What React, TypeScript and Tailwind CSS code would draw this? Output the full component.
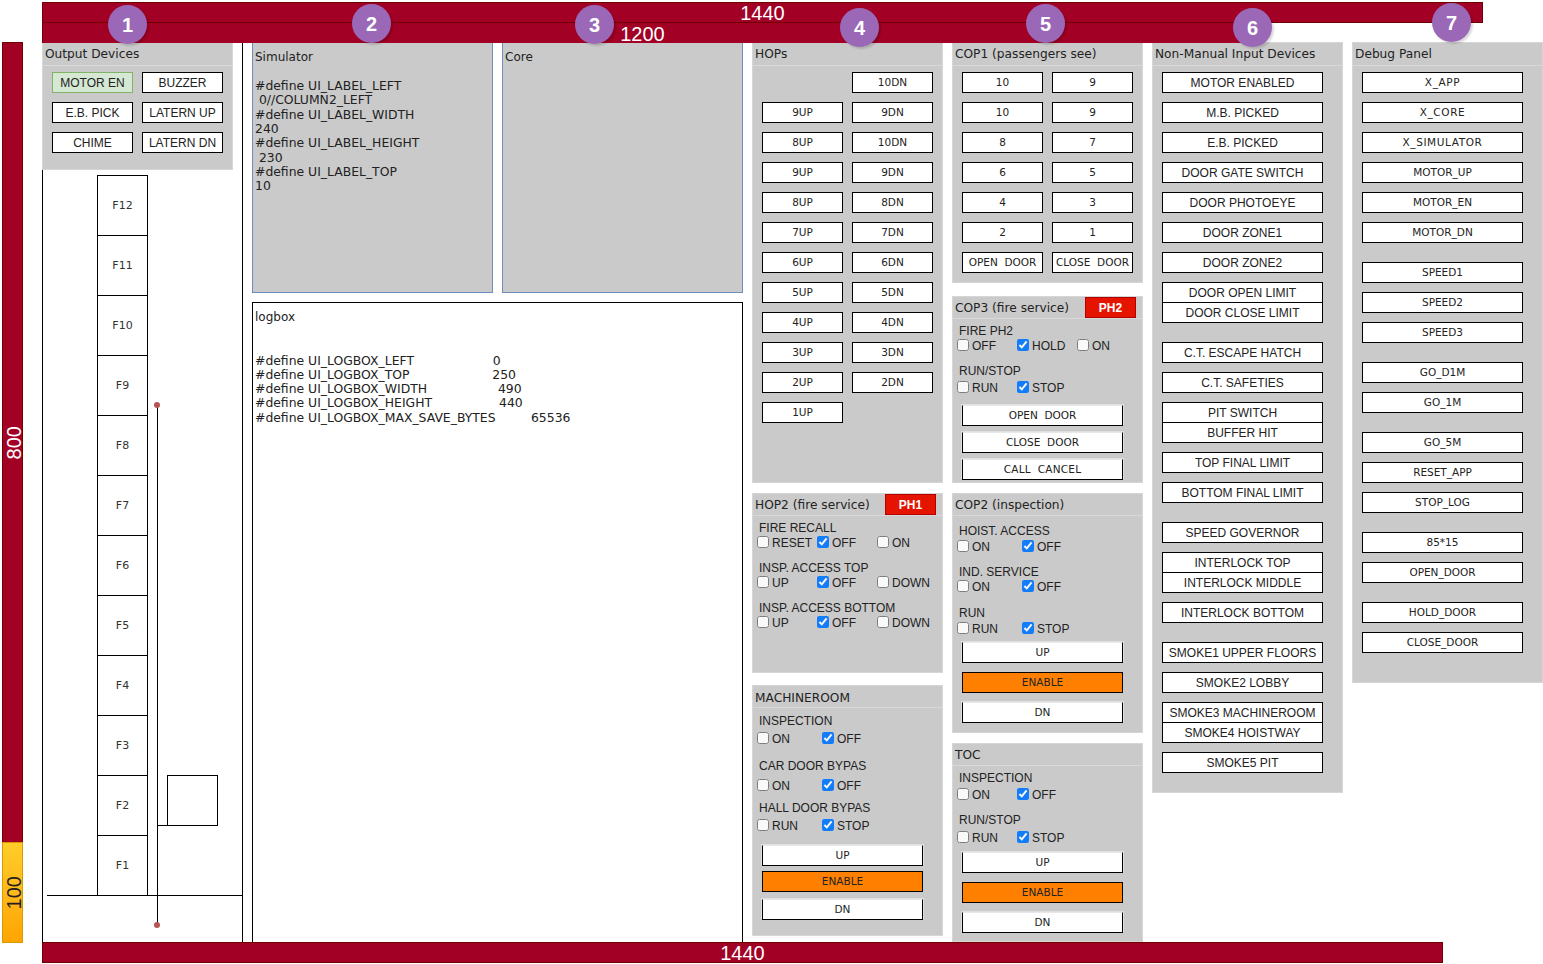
import React from 'react';

type ButtonItem = { label: string; gap?: string };

const sans = "font-['Liberation_Sans',sans-serif]";
const deja = "font-['DejaVu_Sans',sans-serif]";

const Btn = ({ label, small, green, className = '' }: { label: string; small?: boolean; green?: boolean; className?: string }) => (
  <div
    className={`flex h-[21px] items-center justify-center border whitespace-pre text-[#222] ${
      green ? 'border-[#82b366] bg-[#d5e8d4]' : 'border-black bg-white'
    } ${small ? `${deja} text-[10.5px]` : `${sans} text-[12px]`} ${className}`}
  >
    {label}
  </div>
);

// raised button used on the car panels
const RaisedBtn = ({ label, className = '' }: { label: string; className?: string }) => (
  <div
    className={`flex h-[21px] w-[161px] items-center justify-center border border-black border-t-[#e8e8e8] bg-white whitespace-pre ${deja} text-[10.5px] text-[#222] shadow-[-1px_-1px_0_#e0e0e0,1px_-1px_0_#e0e0e0] ${className}`}
  >
    {label}
  </div>
);

const EnableBtn = ({ className = '' }: { className?: string }) => (
  <div
    className={`flex h-[21px] w-[161px] items-center justify-center border border-black bg-[#ff8000] ${deja} text-[10.5px] text-[#222] ${className}`}
  >
    ENABLE
  </div>
);

const Panel = ({
  title,
  badge,
  first,
  titleClass = '',
  className = '',
  children,
}: {
  title: string;
  badge?: string;
  first?: boolean;
  titleClass?: string;
  className?: string;
  children: React.ReactNode;
}) => (
  <div className={`w-[191px] shrink-0 overflow-hidden border border-[#d6d6d6] bg-[#cacaca] ${first ? '-mt-px' : ''} ${className}`}>
    <div
      className={`flex items-center justify-between border-b border-[#d9d9d9] pl-[2px] pr-[6px] ${
        first ? 'h-[23px] pb-px' : 'h-[22px]'
      } ${deja} text-[12.2px] text-[#222] ${titleClass}`}
    >
      <span className="pt-[2px]">{title}</span>
      {badge && (
        <span className={`flex h-[21px] w-[51px] items-center justify-center border border-[#b20000] bg-[#e51400] ${sans} text-[12px] font-bold text-white`}>
          {badge}
        </span>
      )}
    </div>
    {children}
  </div>
);

const Field = ({
  label,
  top,
  gap,
  cols,
  width,
}: {
  label: string;
  top: string;
  gap: string;
  cols: [string, boolean][];
  width: string;
}) => (
  <div className={`${sans} text-[12px] text-[#222] ${top}`}>
    <div className="h-[14px] pl-[6px] leading-[16px]">{label}</div>
    <div className={`flex h-[14px] items-center pl-[4px] ${gap}`}>
      {cols.map(([name, on]) => (
        <label key={name} className={`flex items-center ${width}`}>
          <input type="checkbox" defaultChecked={on} className="m-0 h-[12px] w-[12px] shrink-0 opacity-90" />
          <span className="ml-[3px] whitespace-nowrap pt-[2px] leading-[14px]">{name}</span>
        </label>
      ))}
    </div>
  </div>
);

const hops: string[][] = [
  ['', '10DN'],
  ['9UP', '9DN'],
  ['8UP', '10DN'],
  ['9UP', '9DN'],
  ['8UP', '8DN'],
  ['7UP', '7DN'],
  ['6UP', '6DN'],
  ['5UP', '5DN'],
  ['4UP', '4DN'],
  ['3UP', '3DN'],
  ['2UP', '2DN'],
  ['1UP', ''],
];

const cop1 = ['10', '9', '10', '9', '8', '7', '6', '5', '4', '3', '2', '1', 'OPEN  DOOR', 'CLOSE  DOOR'];

const nonManual: ButtonItem[] = [
  { label: 'MOTOR ENABLED' },
  { label: 'M.B. PICKED' },
  { label: 'E.B. PICKED' },
  { label: 'DOOR GATE SWITCH' },
  { label: 'DOOR PHOTOEYE' },
  { label: 'DOOR ZONE1' },
  { label: 'DOOR ZONE2' },
  { label: 'DOOR OPEN LIMIT' },
  { label: 'DOOR CLOSE LIMIT', gap: '-mt-px' },
  { label: 'C.T. ESCAPE HATCH', gap: 'mt-[19px]' },
  { label: 'C.T. SAFETIES' },
  { label: 'PIT SWITCH' },
  { label: 'BUFFER HIT', gap: '-mt-px' },
  { label: 'TOP FINAL LIMIT' },
  { label: 'BOTTOM FINAL LIMIT' },
  { label: 'SPEED GOVERNOR', gap: 'mt-[19px]' },
  { label: 'INTERLOCK TOP' },
  { label: 'INTERLOCK MIDDLE', gap: '-mt-px' },
  { label: 'INTERLOCK BOTTOM' },
  { label: 'SMOKE1 UPPER FLOORS', gap: 'mt-[19px]' },
  { label: 'SMOKE2 LOBBY' },
  { label: 'SMOKE3 MACHINEROOM' },
  { label: 'SMOKE4 HOISTWAY', gap: '-mt-px' },
  { label: 'SMOKE5 PIT' },
];

const debug: ButtonItem[] = [
  { label: 'X_APP', gap: 'tracking-[0.6px]' },
  { label: 'X_CORE', gap: 'mt-[9px] tracking-[0.6px]' },
  { label: 'X_SIMULATOR', gap: 'mt-[9px] tracking-[0.6px]' },
  { label: 'MOTOR_UP' },
  { label: 'MOTOR_EN' },
  { label: 'MOTOR_DN' },
  { label: 'SPEED1', gap: 'mt-[19px]' },
  { label: 'SPEED2' },
  { label: 'SPEED3' },
  { label: 'GO_D1M', gap: 'mt-[19px]' },
  { label: 'GO_1M' },
  { label: 'GO_5M', gap: 'mt-[19px]' },
  { label: 'RESET_APP' },
  { label: 'STOP_LOG' },
  { label: '85*15', gap: 'mt-[19px]' },
  { label: 'OPEN_DOOR' },
  { label: 'HOLD_DOOR', gap: 'mt-[19px]' },
  { label: 'CLOSE_DOOR' },
];

const ButtonList = ({ items, small }: { items: ButtonItem[]; small?: boolean }) => (
  <div className="flex flex-col pl-[9px] pt-[6px]">
    {items.map((item, i) => (
      <Btn key={i} label={item.label} small={small} className={`w-[161px] ${item.gap ?? (i === 0 ? '' : 'mt-[9px]')}`} />
    ))}
  </div>
);

const floors = ['F12', 'F11', 'F10', 'F9', 'F8', 'F7', 'F6', 'F5', 'F4', 'F3', 'F2', 'F1'];

const circles = [
  { n: 1, pos: 'left-[108px] top-[5px]' },
  { n: 2, pos: 'left-[352px] top-[4px]' },
  { n: 3, pos: 'left-[575px] top-[5px]' },
  { n: 4, pos: 'left-[840px] top-[8px]' },
  { n: 5, pos: 'left-[1026px] top-[4px]' },
  { n: 6, pos: 'left-[1233px] top-[8px]' },
  { n: 7, pos: 'left-[1432px] top-[3px]' },
];

const simulatorText = `#define UI_LABEL_LEFT
 0//COLUMN2_LEFT
#define UI_LABEL_WIDTH
240
#define UI_LABEL_HEIGHT
 230
#define UI_LABEL_TOP
10`;

const logboxText = `#define UI_LOGBOX_LEFT                    0
#define UI_LOGBOX_TOP                     250
#define UI_LOGBOX_WIDTH                  490
#define UI_LOGBOX_HEIGHT                 440
#define UI_LOGBOX_MAX_SAVE_BYTES         65536`;

export default function App() {
  return (
    <div className="relative h-[964px] w-[1543px] overflow-hidden bg-white">
      {/* Width rulers */}
      <div className="relative z-10 w-[1243px] pl-[42px] pt-[2px]">
        <div className={`flex h-[21px] w-[1441px] items-center justify-center border border-[#6f0000] bg-[#a20025] ${sans} text-[20px] text-white`}>
          1440
        </div>
        <div className={`-mt-px flex h-[21px] w-[1201px] items-center justify-center border border-[#6f0000] border-b-0 bg-[#a20025] pt-[2px] ${sans} text-[20px] text-white`}>
          1200
        </div>
      </div>

      <div className="flex h-[899px]">
        {/* Height rulers */}
        <div className="w-[42px] shrink-0 pl-[2px] -mt-px">
          <div className={`flex h-[801px] w-[21px] items-center justify-center border border-[#6f0000] bg-[#a20025] pl-[2px] ${sans} text-[20px] text-white`}>
            <span className="rotate-180 [writing-mode:vertical-rl]">800</span>
          </div>
          <div className={`-mt-px flex h-[101px] w-[21px] items-center justify-center border border-[#d79b00] bg-gradient-to-b from-[#ffcd28] to-[#ffa500] pl-[2px] ${sans} text-[20px] text-[#222]`}>
            <span className="rotate-180 [writing-mode:vertical-rl]">100</span>
          </div>
        </div>

        {/* Output devices + shaft */}
        <div className="relative h-full w-[201px] shrink-0 border-x border-black">
          <div className="-ml-px w-[191px]">
            <Panel title="Output Devices" first className="h-[128px]">
              <div className="grid grid-cols-[81px_81px] gap-[9px] pl-[9px] pt-[6px]">
                <Btn label="MOTOR EN" green />
                <Btn label="BUZZER" />
                <Btn label="E.B. PICK" />
                <Btn label="LATERN UP" />
                <Btn label="CHIME" />
                <Btn label="LATERN DN" />
              </div>
            </Panel>
          </div>
          <div className="ml-[54px] mt-[5px] flex w-[51px] flex-col">
            {floors.map((f, i) => (
              <div key={f} className={`flex items-center justify-center border-x border-b border-black pt-[2px] ${i === 0 ? 'h-[61px] border-t' : 'h-[60px]'} ${deja} text-[11px] text-[#333]`}>
                {f}
              </div>
            ))}
          </div>
          <div className="-mt-px ml-[4px] h-px bg-black" />

          {/* rope, counterweight and car sit on the drawing */}
          <div className="absolute left-[114px] top-[362px] h-[520px] w-px bg-black" />
          <div className="absolute left-[111px] top-[359px] h-[6px] w-[6px] rounded-full bg-[#b85450]" />
          <div className="absolute left-[111px] top-[879px] h-[6px] w-[6px] rounded-full bg-[#b85450]" />
          <div className="absolute left-[124px] top-[732px] h-[51px] w-[51px] border border-black" />
          <div className="absolute left-[115px] top-[782px] h-px w-[9px] bg-black" />
        </div>

        {/* Simulator, core, logbox */}
        <div className="ml-[9px] flex w-[491px] shrink-0 flex-col">
          <div className="flex gap-[9px]">
            {['Simulator', 'Core'].map((name) => (
              <div key={name} className={`h-[250px] w-[241px] border border-t-0 border-[#6c8ebf] bg-[#cacaca] pl-[2px] pt-[7px] ${deja} text-[12px] text-[#222]`}>
                <div className="h-[14px] leading-[14px]">{name}</div>
                {name === 'Simulator' && <pre className={`mt-[15px] ${deja} text-[12.4px] leading-[14.33px]`}>{simulatorText}</pre>}
              </div>
            ))}
          </div>
          <div className={`mt-[9px] flex-1 border border-b-0 border-black pl-[2px] pt-[7px] ${deja} text-[12px] text-[#222]`}>
            <div className="h-[14px] leading-[14px]">logbox</div>
            <pre className={`mt-[29.5px] ${deja} text-[12.4px] leading-[14.33px]`}>{logboxText}</pre>
          </div>
        </div>

        {/* HOPs column */}
        <div className="ml-[9px] flex w-[191px] shrink-0 flex-col">
          <Panel title="HOPs" first className="h-[441px]">
            <div className="grid grid-cols-[81px_81px] gap-[9px] pl-[9px] pt-[6px]">
              {hops.flat().map((label, i) => (label ? <Btn key={i} label={label} small /> : <div key={i} className="h-[21px]" />))}
            </div>
          </Panel>
          <Panel title="HOP2 (fire service)" badge="PH1" className="mt-[10px] h-[180px]">
            <Field label="FIRE RECALL" top="mt-[4px]" gap="mt-[1px]" width="w-[60px]" cols={[['RESET', false], ['OFF', true], ['ON', false]]} />
            <Field label="INSP. ACCESS TOP" top="mt-[11px]" gap="mt-[1px]" width="w-[60px]" cols={[['UP', false], ['OFF', true], ['DOWN', false]]} />
            <Field label="INSP. ACCESS BOTTOM" top="mt-[11px]" gap="mt-[1px]" width="w-[60px]" cols={[['UP', false], ['OFF', true], ['DOWN', false]]} />
          </Panel>
          <Panel title="MACHINEROOM" titleClass="pt-[2px]" className="mt-[12px] h-[251px]">
            <Field label="INSPECTION" top="mt-[5px]" gap="mt-[4px]" width="w-[65px]" cols={[['ON', false], ['OFF', true]]} />
            <Field label="CAR DOOR BYPAS" top="mt-[13px]" gap="mt-[6px]" width="w-[65px]" cols={[['ON', false], ['OFF', true]]} />
            <Field label="HALL DOOR BYPAS" top="mt-[8px]" gap="mt-[4px]" width="w-[65px]" cols={[['RUN', false], ['STOP', true]]} />
            <div className="pl-[9px]">
              <RaisedBtn label="UP" className="mt-[13px]" />
              <EnableBtn className="mt-[5px]" />
              <RaisedBtn label="DN" className="mt-[7px]" />
            </div>
          </Panel>
        </div>

        {/* Car panels column */}
        <div className="ml-[9px] flex w-[191px] shrink-0 flex-col">
          <Panel title="COP1 (passengers see)" first className="h-[241px]">
            <div className="grid grid-cols-[81px_81px] gap-[9px] pl-[9px] pt-[6px]">
              {cop1.map((label, i) => (
                <Btn key={i} label={label} small />
              ))}
            </div>
          </Panel>
          <Panel title="COP3 (fire service)" badge="PH2" className="mt-[13px] h-[187px]">
            <Field label="FIRE PH2" top="mt-[4px]" gap="mt-[1px]" width="w-[60px]" cols={[['OFF', false], ['HOLD', true], ['ON', false]]} />
            <Field label="RUN/STOP" top="mt-[11px]" gap="mt-[3px]" width="w-[60px]" cols={[['RUN', false], ['STOP', true]]} />
            <div className="pl-[9px]">
              <RaisedBtn label="OPEN  DOOR" className="mt-[11px]" />
              <RaisedBtn label="CLOSE  DOOR" className="mt-[6px]" />
              <RaisedBtn label="CALL  CANCEL" className="mt-[6px] tracking-[0.2px]" />
            </div>
          </Panel>
          <Panel title="COP2 (inspection)" className="mt-[10px] h-[240px]">
            <Field label="HOIST. ACCESS" top="mt-[7px]" gap="mt-[2px]" width="w-[65px]" cols={[['ON', false], ['OFF', true]]} />
            <Field label="IND. SERVICE" top="mt-[11px]" gap="mt-[1px]" width="w-[65px]" cols={[['ON', false], ['OFF', true]]} />
            <Field label="RUN" top="mt-[12px]" gap="mt-[2px]" width="w-[65px]" cols={[['RUN', false], ['STOP', true]]} />
            <div className="pl-[9px]">
              <RaisedBtn label="UP" className="mt-[7px]" />
              <EnableBtn className="mt-[9px]" />
              <RaisedBtn label="DN" className="mt-[9px]" />
            </div>
          </Panel>
          <Panel title="TOC" className="mt-[10px] h-[199px]">
            <Field label="INSPECTION" top="mt-[4px]" gap="mt-[3px]" width="w-[60px]" cols={[['ON', false], ['OFF', true]]} />
            <Field label="RUN/STOP" top="mt-[11px]" gap="mt-[4px]" width="w-[60px]" cols={[['RUN', false], ['STOP', true]]} />
            <div className="pl-[9px]">
              <RaisedBtn label="UP" className="mt-[8px]" />
              <EnableBtn className="mt-[9px]" />
              <RaisedBtn label="DN" className="mt-[9px]" />
            </div>
          </Panel>
        </div>

        {/* Input devices and debug */}
        <div className="ml-[9px] shrink-0">
          <Panel title="Non-Manual Input Devices" first className="h-[751px]">
            <ButtonList items={nonManual} />
          </Panel>
        </div>
        <div className="ml-[9px] shrink-0">
          <Panel title="Debug Panel" first className="h-[641px]">
            <ButtonList items={debug} small />
          </Panel>
        </div>
      </div>

      <div className={`relative z-10 ml-[42px] flex h-[21px] w-[1401px] items-center justify-center border border-[#6f0000] bg-[#a20025] ${sans} text-[20px] text-white`}>
        1440
      </div>

      {/* Numbered markers */}
      {circles.map((c) => (
        <div
          key={c.n}
          className={`absolute z-20 ${c.pos} flex h-[39px] w-[39px] items-center justify-center rounded-full bg-[#9a68b7] ${sans} text-[20px] font-bold text-white shadow-[2px_2px_2px_rgba(0,0,0,0.15)]`}
        >
          {c.n}
        </div>
      ))}
    </div>
  );
}
